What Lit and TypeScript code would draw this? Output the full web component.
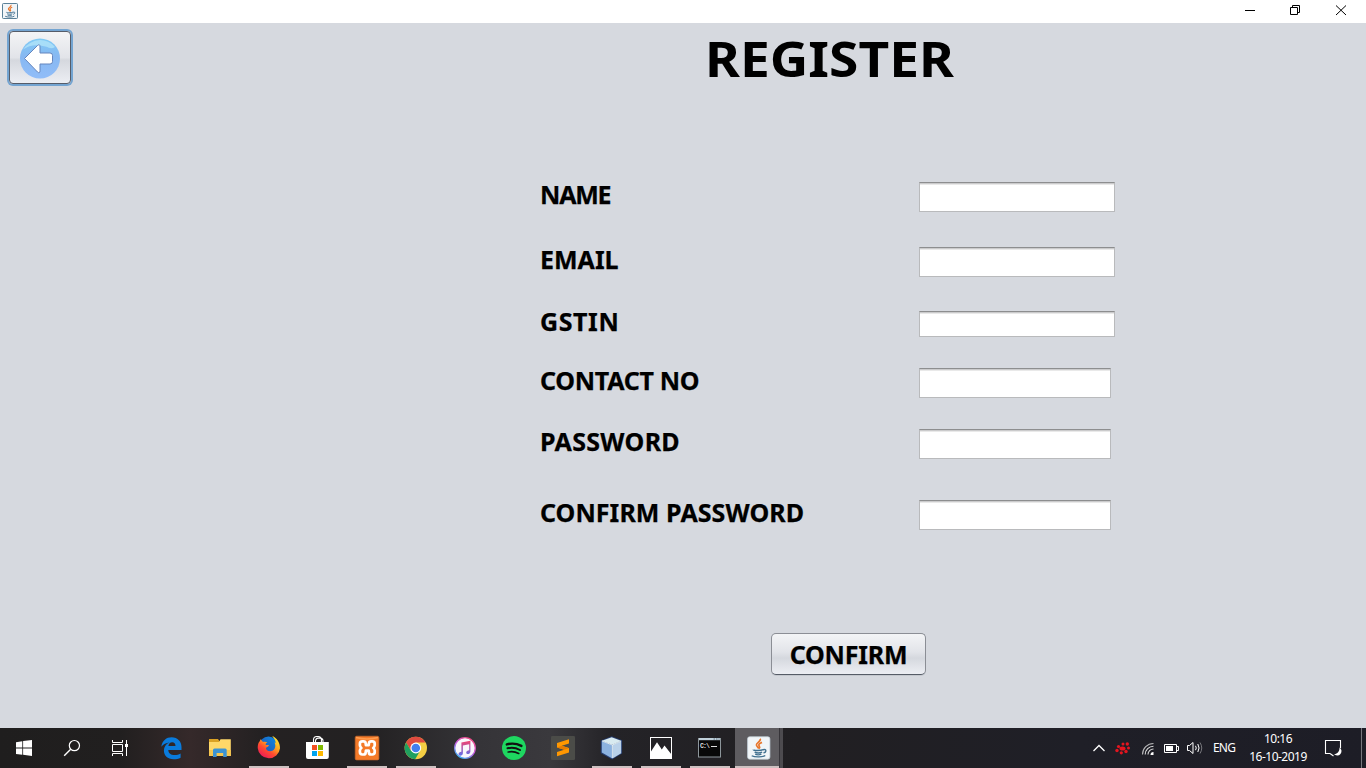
import { LitElement, html, css, svg } from "lit";
import { customElement } from "lit/decorators.js";

/* Java coffee cup, drawn in a 16x16 box */
const javaCup = svg`
  <rect x=".4" y=".4" width="15.2" height="15.2" rx="1.4" fill="#f1f5f8" stroke="#c6d3dc" stroke-width=".5"/>
  <path d="M8.900 1.800C10.100 3.400 6.200 4.400 6.400 6c.1 1 1.400 1.400 1.500 2.400M10.200 4.200C7.800 5.200 7.700 5.900 8.400 6.800c.5.7.2 1.200-.2 1.600" fill="none" stroke="#e8762c" stroke-width="1.150"/>
  <path d="M4.400 9.100c-.6.800 5.200.8 6.600 0M5.200 10.800c1.200.6 3.800.6 5.100 0M5.600 12.200c1 .5 3 .5 4.200 0M3.200 13.300c2 1.100 7.800 1 9.200-.2M11 9.200c2.600-.8 2.200 1.900.2 2.100" fill="none" stroke="#41708f" stroke-width=".95"/>`;

interface Task { x: number; w: number; open?: boolean; active?: boolean; art: unknown; }

const tasks: Task[] = [
  { x: 0, w: 48, art: svg`<path fill="#fff" d="M16 14.200l6.300-1v6.300H16zM23.100 13.100L32 11.900v7.600h-8.900zM16 20.400h6.300v6.400l-6.300-.9zM23.100 20.400H32V28l-8.900-1.200z"/>` },
  { x: 48, w: 48, art: svg`<g fill="none" stroke="#fff"><circle cx="74.400" cy="17.600" r="5.100" stroke-width="1.200"/><path d="M70.700 21.300L64.200 27.800" stroke-width="1.400"/></g>` },
  { x: 96, w: 52, art: svg`<g fill="none" stroke="#fff"><path d="M112.500 16.500h10v7h-10zM112.500 12v2.500h10V12M112.500 28v-2.500h10V28M126.500 12v16"/></g><rect x="125" y="16" width="3" height="3" fill="#fff"/>` },
  { x: 148, w: 48, art: svg`<path fill="#0a7bdc" d="M161.300 18.700C162.300 12.500 166.500 9.300 171.600 9.300c6.200 0 9.900 4.400 9.900 9.800v2.900h-13.200c.1 3.500 3 5.100 6.200 5.100 2.400 0 4.400-.7 6.100-1.700v4.300c-1.900 1-4.300 1.600-7.100 1.600-6 0-9.600-3.600-9.600-8.700 0-3.900 2-6.800 5.500-8.200-3.300.2-5.900 1.800-8.100 4.300zM168.400 18.100h7.100c0-2.500-1.200-3.900-3.300-3.900-2.100 0-3.500 1.500-3.800 3.900z"/>` },
  { x: 196, w: 49, art: svg`<path fill="#dba224" d="M209 11h9l1.800 2.500V16H209z"/><path fill="#ffd869" d="M209 14h10l1.500-2.700h10.300V28H209z"/><path fill="#f6c64f" d="M209 22h21.800v6H209z"/><path fill="#3c93d3" d="M213 29v-7q0-1.500 1.500-1.500h10.700q1.500 0 1.500 1.500v7h-3.500v-4h-6.600v4z"/>` },
  { x: 245, w: 48, open: true, art: svg`
    <defs><linearGradient id="fx" x1=".9" y1="0" x2=".2" y2="1"><stop offset="0" stop-color="#fff23c"/><stop offset=".4" stop-color="#ffa51f"/><stop offset=".65" stop-color="#ff4a30"/><stop offset="1" stop-color="#e9145d"/></linearGradient>
    <linearGradient id="fb" x1="1" y1="0" x2="0" y2="1"><stop offset="0" stop-color="#0b8fe8"/><stop offset="1" stop-color="#2946a8"/></linearGradient></defs>
    <circle cx="268.500" cy="17.800" r="9.300" fill="url(#fb)"/>
    <path fill="url(#fx)" d="M260.500 11.200l2.500 2.900c1.800-.6 3.100-.2 4.400.4-1.800.7-2 1.800-1.500 2.500h3c0 1.500-2 2-3 3 .5 3.200 4.200 4.200 7 2.500 3-2 2.800-5.500 1.600-8l1.200.6c0-2.500-1.400-4.300-2.600-5.900-.4-.3-.6-.7-.9-1.100 4.800 2 7.900 6.600 7.800 12.200A11.200 11.200 0 0 1 257.700 20c0-3 .5-5.500 2-6.800z"/>` },
  { x: 293, w: 49, art: svg`<path fill="none" stroke="#fff" stroke-width="1.100" d="M313.500 15v-3.200q0-3.300 3.300-3.300h1.300q3.300 0 3.300 3.300V15M315.500 14v-1.500q.5-2.600 4-2.600 3.200.3 3.500 2.600V14"/><path fill="#fff" d="M306 14h22.800v15q0 2-2 2H308q-2 0-2-2z"/><path fill="#f25022" d="M312 17h5v5h-5z"/><path fill="#7fba00" d="M318 17h5v5h-5z"/><path fill="#00a4ef" d="M312 23h5v5h-5z"/><path fill="#ffb900" d="M318 23h5v5h-5z"/>` },
  { x: 342, w: 49, open: true, art: svg`<rect x="355.200" y="8.200" width="23.700" height="23.700" rx="1.500" fill="#f47a28" stroke="#c9682b" stroke-width=".7"/><path d="M356 9.500q11 3 22 0" fill="none" stroke="#ff9d50" stroke-width="1.500"/><path fill="none" stroke="#fff" stroke-width="2.700" stroke-linejoin="round" d="M362.300 13.400h1.200q2 0 2.200 2l.2 1.800h2.800l.2-1.800q.2-2 2.200-2h1.200q2.400 0 2.400 2.400v1.500q0 1.600-1.500 2.700 1.500 1 1.500 2.600v1.500q0 2.400-2.400 2.400h-1.200q-2 0-2.200-2l-.2-1.800h-2.800l-.2 1.800q-.2 2-2.200 2h-1.200q-2.400 0-2.400-2.400v-1.500q0-1.600 1.500-2.600-1.500-1.100-1.500-2.700v-1.500q0-2.400 2.400-2.400z"/>` },
  { x: 391, w: 49, open: true, art: svg`<circle cx="415.800" cy="20" r="11.200" fill="#f4ce43"/><path fill="#df4b40" d="M406 14.600A11.200 11.200 0 0 1 425.500 14.500H415.800L411 22.700z"/><path fill="#20a05f" d="M406.100 14.400A11.200 11.200 0 0 0 415.200 31.200l4.900-8.400-4.300 2-4.800-2z"/><circle cx="415.800" cy="20" r="5.400" fill="#fff"/><circle cx="415.800" cy="20" r="4.300" fill="#427fed"/>` },
  { x: 440, w: 49, art: svg`<defs><linearGradient id="it" x1=".8" y1="0" x2=".2" y2="1"><stop offset="0" stop-color="#f44b7e"/><stop offset=".5" stop-color="#c55ce0"/><stop offset="1" stop-color="#35b7f3"/></linearGradient><linearGradient id="nt" x2="0" y2="1"><stop offset="0" stop-color="#f3426f"/><stop offset="1" stop-color="#6270ed"/></linearGradient></defs><circle cx="465" cy="20" r="10.300" fill="#faf7fc" stroke="url(#it)" stroke-width="1.300"/><path fill="url(#nt)" d="M461.400 14.600l9-1.800v10.600c0 2.700-3.900 3.600-4.200 1.300-.1-1.800 1.500-2.200 3-2.500v-6l-6.300 1.300v7.500c0 3-4 3.500-4.400 1.300-.1-1.800 1.400-2.300 2.900-2.600z"/>` },
  { x: 489, w: 49, art: svg`<circle cx="514" cy="20" r="12" fill="#1ed760"/><g fill="none" stroke="#111" stroke-linecap="round"><path d="M506.800 16.400q7.500-2.200 14.600 1.500" stroke-width="2.400"/><path d="M507.500 20.300q6.500-1.700 12.500 1.700" stroke-width="2"/><path d="M508.200 24q5.500-1.300 10.500 1.500" stroke-width="1.600"/></g>` },
  { x: 538, w: 49, art: svg`<rect x="551" y="8" width="24" height="24" rx="1.300" fill="#4b4c48"/><path fill="#ff9800" d="M557 15l12-3.700v4.200l-7.200 2.300 7.200 2.200v4.500L557 28.200V24l7.200-2.300-7.200-2.200z"/><path d="M557 19.500l7.200 2.200 4.800-1.500-7.200-2.400z" fill="#e77d00"/>` },
  { x: 587, w: 49, open: true, art: svg`<path fill="#264b96" opacity=".65" d="M611.700 8.300l10.400 4v13.300l-10 6-11.300-6.300V12.500z"/><path fill="#d8eaf0" d="M611.700 9.300l9.400 3.500-8.700 4-10.600-4z"/><path fill="#8cb2df" d="M601.800 13l10.500 4v13.500l-10.500-6z"/><path fill="#b9d1e9" d="M612.500 17l8.700-4v12.200l-8.700 5.300z"/><path fill="none" stroke="#f3fafa" stroke-width=".8" d="M602 13l10.400 4 8.700-4M612.400 17v13"/>` },
  { x: 636, w: 49, open: true, art: svg`<rect x="650.500" y="9.500" width="21" height="21" fill="none" stroke="#fff"/><path fill="#fff" d="M651 23.500l6-9.300 4.800 7.400 2.700-4.200 7 9.200V31H651z"/>` },
  { x: 685, w: 49, open: true, art: svg`<rect x="698.500" y="10.500" width="22" height="18.500" fill="#080808" stroke="#8d969b"/><path fill="#c0d0da" d="M699 10h21v2.200h-21z"/><path stroke="#5c7181" d="M713.500 11h1.500m1 0h1.500m1 0h1"/><text x="700" y="19.500" font-size="6.500" font-weight="bold" fill="#ddd" font-family="Liberation Mono" textLength="10">C:\\</text><path d="M711 18.500h6" stroke="#ddd"/>` },
  { x: 735, w: 48, active: true, art: svg`<g transform="translate(747 8.200) scale(1.470)">${javaCup}</g>` },
];

@customElement("task-bar")
export class TaskBar extends LitElement {
  static styles = css`
    :host { display: flex; height: 40px; color: #fff; font: 12px "Noto Sans", sans-serif;
      background: linear-gradient(90deg, #1f1e1e 0, #211f1f 120px, #35292a 190px, #242122 260px, #232122 370px, #353438 480px, #3a393d 550px, #242327 610px, #211f22 800px, #1f1f27 1080px, #1d1d26 100%); }
    svg { display: block; }
    .task { position: relative; height: 40px; flex: none; }
    .task.open::after { content: ""; position: absolute; height: 2px; bottom: 0; left: 50%; width: 40px; margin-left: -20px; background: #cdc1c1; }
    .task.last { margin-left: 1px; background: linear-gradient(90deg, #5e5c60 0 44px, #363439 44px 45px, #4d4b4f 45px); }
    .task.last::after { content: ""; position: absolute; height: 2px; bottom: 0; left: 0; right: 4px; background: #cdc1c1; }
    .space { flex: 1; }
    .lang { width: 27px; line-height: 39px; white-space: nowrap; letter-spacing: -.8px; }
    .clock { width: 76px; text-align: center; line-height: 18px; padding-top: 2px; letter-spacing: -.5px; white-space: nowrap; }
    .peek { width: 4px; border-left: 1px solid #77777d; }
  `;
  render() {
    return html`
      ${tasks.map(t => html`<div class="task ${t.open ? "open" : ""} ${t.active ? "last" : ""}">
        <svg width=${t.w} height="40" viewBox="${t.x} 0 ${t.w} 40">${t.art}</svg></div>`)}
      <div class="space"></div>
      <svg width="125" height="40" viewBox="1088 0 125 40">
        <path d="M1093.500 23l5.500-5.500 5.500 5.500" fill="none" stroke="#fff" stroke-width="1.300"/>
        <g fill="#e4151f"><ellipse cx="1122.500" cy="20.500" rx="3" ry="2"/><circle cx="1123" cy="16" r="1.500"/><circle cx="1127.300" cy="16" r="1.700"/><circle cx="1118.500" cy="18.500" r="1.600"/><circle cx="1117" cy="22.500" r="1.700"/><circle cx="1121.300" cy="24.800" r="1.600"/><circle cx="1126" cy="23.500" r="1.700"/><circle cx="1128.500" cy="20" r="1.500"/></g>
        <g fill="none" stroke="#ddd" stroke-width="1.100"><path d="M1142.500 26.500a11 11 0 0 1 11-11" opacity=".8"/><path d="M1145.200 26.500a8.300 8.300 0 0 1 8.300-8.300"/><path d="M1148 26.500a5.500 5.500 0 0 1 5.500-5.500"/></g><path d="M1150.500 27a3 3 0 0 1 3-3v3z" fill="#fff"/>
        <path d="M1164.500 16.500h12v8h-12zM1177 18.500h1.500v4h-1.500" fill="none" stroke="#fff"/><path fill="#fff" d="M1166 18h7v5h-7z"/>
        <path d="M1187.500 17.500h2l3.500-3v11l-3.500-3h-2zM1195.500 17.800q1.500 2.200 0 4.400M1197.800 16q2.500 4 0 8" fill="none" stroke="#fff"/><path d="M1200 14.500q3.500 5.500 0 11" fill="none" stroke="#77777c"/>
      </svg>
      <div class="lang">ENG</div>
      <div class="clock">10:16<br />16-10-2019</div>
      <svg width="45" height="40" viewBox="1316 0 45 40"><path d="M1330 25.500h-4.500v-13h15v7.500M1330 25.500l3.500 2.500" fill="none" stroke="#fff" stroke-width="1.100"/><path d="M1339.500 19.500a4.300 4.300 0 1 1-5.500 6.500c3 .3 5.700-2.300 5.500-6.500z" fill="#fff"/></svg>
      <div class="peek"></div>`;
  }
}

const fields = [
  { label: "NAME", gap: 0, h: 30, w: 196, sp: -1.2 },
  { label: "EMAIL", gap: 35, h: 30, w: 196, sp: 0 },
  { label: "GSTIN", gap: 34, h: 26, w: 196, sp: 0.6 },
  { label: "CONTACT NO", gap: 31, h: 30, w: 192, sp: -0.3 },
  { label: "PASSWORD", gap: 31, h: 30, w: 192, sp: 0.3 },
  { label: "CONFIRM PASSWORD", gap: 41, h: 30, w: 192, sp: 0.06 },
];

@customElement("app-root")
export class AppRoot extends LitElement {
  static styles = css`
    :host { display: flex; flex-direction: column; width: 1366px; height: 768px; overflow: hidden; background: #d6d9df; color: #000; font-family: "Noto Sans", sans-serif; }
    svg { display: block; }
    .title { height: 23px; background: #fff; display: flex; justify-content: space-between; flex: none; }
    .appicon { margin: 3px 0 0 2px; }
    .main { flex: 1; display: flex; flex-direction: column; min-height: 0; }
    .top { display: flex; height: 159px; align-items: flex-start; flex: none; }
    .back { box-sizing: border-box; width: 62px; height: 53px; margin: 8px 0 0 9px; padding: 0; display: grid; place-items: center; border: 1px solid #555c69; border-radius: 4px; background: linear-gradient(#f3f4f6, #e2e4e9 50%, #d5d8de 55%, #eceef3); box-shadow: 0 0 0 2px #73a4d1; }
    h1 { margin: 5px 0 0 633.5px; font-size: 49px; line-height: 60px; font-weight: 700; white-space: nowrap; transform: scaleX(1.087); transform-origin: 0 0; }
    .form { padding-left: 540px; }
    .row { display: flex; align-items: center; }
    .label { width: 379px; flex: none; padding-bottom: 6px; font-size: 25px; line-height: 26px; font-weight: 700; white-space: nowrap; -webkit-text-stroke: .25px #000; }
    input { box-sizing: border-box; margin: 0; padding: 0; border: 1px solid #b9babc; border-top-color: #8d8e8f; border-radius: 0; background: linear-gradient(#cbcbcc 0 1px, #e9e9e9 1px 2px, #fff 2px); outline: none; }
    .confirm { box-sizing: border-box; width: 155px; height: 42px; margin: 103px 0 0 771px; padding: 0; border: 1px solid #8b8e95; border-bottom-color: #565c67; border-radius: 5px; background: linear-gradient(#f3f4f6, #e2e4e9 45%, #d5d8de 60%, #eceef3); box-shadow: 0 1px 0 #c4c8ce; color: #000; font: 700 25px/36px "Noto Sans", sans-serif; letter-spacing: -.2px; white-space: nowrap; -webkit-text-stroke: .25px #000; }
  `;
  render() {
    return html`
      <div class="title">
        <svg class="appicon" width="16" height="16" viewBox="0 0 16 16">${javaCup}<rect x=".5" y=".5" width="15" height="15" rx="1" fill="none" stroke="#5b8198"/></svg>
        <svg width="136" height="23" viewBox="1230 0 136 23"><g fill="none" stroke="#000"><path d="M1245 10.500h10M1290.500 7.500h7v7h-7zM1292.500 7.500v-2h7v7h-2M1336 5.500l10 9.500M1346 5.500l-10 9.500"/></g></svg>
      </div>
      <div class="main">
        <div class="top">
          <button class="back" aria-label="Back">
            <svg width="42" height="42" viewBox="0 0 42 42">
              <defs><linearGradient id="bg" x2="0" y2="1"><stop offset="0" stop-color="#80cbf5"/><stop offset=".45" stop-color="#87b8f2"/><stop offset="1" stop-color="#91bdf8"/></linearGradient></defs>
              <circle cx="21" cy="21.500" r="20" fill="url(#bg)"/>
              <path d="M4 12.500Q10.500 3.500 21 3q9 0 15 7-4 2.500-8.500-.3Q13.500 5.500 4 12.500z" fill="#b4e6fa" opacity=".75"/>
              <path d="M5.500 21.500L18.500 8.500q2.500-2 2.500 1.500v6h10q2.500 0 2.500 2.500v6q0 2.500-2.500 2.500H21v6.500q0 3.500-2.500 1.500z" fill="#fff" stroke="#6585bd"/>
            </svg>
          </button>
          <h1>REGISTER</h1>
        </div>
        <div class="form">
          ${fields.map(f => html`<div class="row" style="margin-top:${f.gap}px;height:${f.h}px">
            <span class="label" style="letter-spacing:${f.sp}px">${f.label}</span>
            <input aria-label=${f.label} style="width:${f.w}px;height:${f.h}px" />
          </div>`)}
        </div>
        <button class="confirm">CONFIRM</button>
      </div>
      <task-bar></task-bar>`;
  }
}
